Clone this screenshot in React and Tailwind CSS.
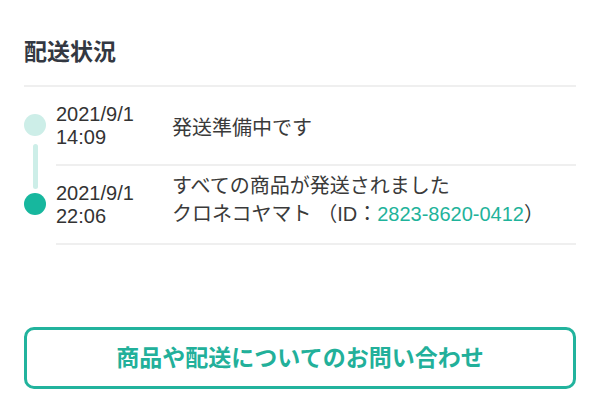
const events = [
    { date: '2021/9/1', time: '14:09', lines: ['発送準備中です'], active: false },
    { date: '2021/9/1', time: '22:06', lines: ['すべての商品が発送されました'], tracking: { carrier: 'クロネコヤマト', id: '2823-8620-0412' }, active: true },
];

const font = { fontFamily: '"Liberation Sans", "Noto Sans CJK JP", sans-serif' };

// --- Timeline marker (circle + connector) ---
const Marker = ({ index, count, active }) => (
    <div className="w-[32px] flex flex-col items-start self-stretch">
        <div className="w-[22px] flex flex-col items-center flex-1">
            <div className="flex-1 flex justify-center pb-[4px]">
                {index > 0 && <div className="w-[5px] h-full bg-[#cdeee8] rounded-b-sm" />}
            </div>
            <div className={`w-[22px] h-[22px] rounded-full ${active ? 'bg-[#17b79e]' : 'bg-[#cdeee8]'}`} />
            <div className="flex-1 flex justify-center pt-[8px]">
                {index < count - 1 && <div className="w-[5px] h-full bg-[#cdeee8] rounded-t-sm" />}
            </div>
        </div>
    </div>
);

const EventRow = ({ event, index, count }) => (
    <div className="flex">
        <Marker index={index} count={count} active={event.active} />
        <div className="flex-1 flex items-center h-[79px] border-b-2 border-[#efefef]">
            <div className="w-[116px] text-[20px] leading-[23px] text-[#333]">
                <div>{event.date}</div>
                <div>{event.time}</div>
            </div>
            <div className={`text-[20px] leading-[28px] text-[#3a3a3a] ${event.tracking ? 'mb-[10px]' : 'mt-[4px]'}`}>
                {event.lines.map(l => <div key={l}>{l}</div>)}
                {event.tracking && (
                    <div>
                        {event.tracking.carrier} （ID：<span className="text-[#1fb39b]">{event.tracking.id}</span>）
                    </div>
                )}
            </div>
        </div>
    </div>
);

export default function App() {
    return (
        <div className="w-[600px] h-[413px] bg-white px-6 pt-[36px]" style={font}>
            <h2 className="text-[23px] leading-[32px] font-bold text-[#333842]">配送状況</h2>
            <div className="mt-[17px] h-[2px] bg-[#efefef]" />

            {/* Timeline */}
            <div>
                {events.map((event, i) => (
                    <EventRow key={i} event={event} index={i} count={events.length} />
                ))}
            </div>

            {/* Contact button */}
            <button className="mt-[82px] w-full h-[62px] rounded-[10px] border-[3px] border-[#22b39d] bg-white text-[23px] font-bold text-[#22b09a] flex items-center justify-center">
                商品や配送についてのお問い合わせ
            </button>
        </div>
    );
}
